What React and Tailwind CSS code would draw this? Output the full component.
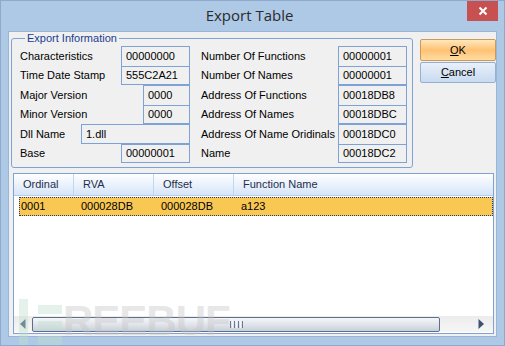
import React from "react";

const rows = [
  { left: "Characteristics", lval: "00000000", lw: "w-[69px]", lb: "border-t", right: "Number Of Functions", rval: "00000001", rb: "border-t", h: "h-[20px]" },
  { left: "Time Date Stamp", lval: "555C2A21", lw: "w-[69px]", lb: "border-y", right: "Number Of Names", rval: "00000001", rb: "border-y", h: "h-[19px]" },
  { left: "Major Version", lval: "0000", lw: "w-[47px]", lb: "border-t", right: "Address Of Functions", rval: "00018DB8", rb: "border-t", h: "h-[20px]" },
  { left: "Minor Version", lval: "0000", lw: "w-[47px]", lb: "border-y", right: "Address Of Names", rval: "00018DBC", rb: "border-y", h: "h-[19px]" },
  { left: "Dll Name", lval: "1.dll", lw: "w-[109px]", lb: "border-y", right: "Address Of Name Oridinals", rval: "00018DC0", rb: "border-t", h: "h-[20px]" },
  { left: "Base", lval: "00000001", lw: "w-[69px]", lb: "border-y", right: "Name", rval: "00018DC2", rb: "border-y", h: "h-[19px]" },
];

const columns = [
  { name: "Ordinal", w: "w-[60px] border-r" },
  { name: "RVA", w: "w-[80px] border-r" },
  { name: "Offset", w: "w-[80px] border-r" },
  { name: "Function Name", w: "flex-1" },
];

const App = () => {
  return (
    <div className="w-[505px] h-[346px] bg-[#adc9e6] border border-[#8ea9cc] flex flex-col relative overflow-hidden font-['Liberation_Sans',Arial,sans-serif] text-[11px] text-black">
      {/* Title bar */}
      <div className="h-[30px] flex">
        <div className="flex-1" />
        <div className="flex items-center text-[15px] text-[#2b2b2b] font-['Open_Sans',sans-serif] pb-[2px]">
          Export Table
        </div>
        <div className="flex-1 flex justify-end pr-[6px]">
          <div className="w-[31px] h-[21px] -mt-px bg-[#c75050] flex items-center justify-center">
            <svg width="10" height="10" viewBox="0 0 10 10">
              <path d="M1.5 1.5 L8.5 8.5 M8.5 1.5 L1.5 8.5" stroke="#fff" strokeWidth="2" />
            </svg>
          </div>
        </div>
      </div>

      {/* Client area */}
      <div className="mx-[7px] h-[306px] bg-[#f0f0f0] border border-[#9ab5d8] flex flex-col">
        <div className="flex">
          <fieldset className="ml-[2px] mt-[1px] w-[402px] border border-[#7ea2d6] rounded-[3px] pl-[8px] pr-[5px] pt-[2px] pb-[4px]">
            <legend className="ml-[5px] px-[2px] leading-[11px] text-[#1a3d8f]">Export Information</legend>
            {rows.map((r, i) => (
              <div key={i} className={`flex items-stretch ${r.h}`}>
                <div className="w-[170px] flex items-center justify-between">
                  <span>{r.left}</span>
                  <div className={`${r.lw} h-full ${r.lb} border-x border-[#7ea2d6] flex items-center pl-[4px]`}>
                    {r.lval}
                  </div>
                </div>
                <div className="ml-[11px] w-[137px] flex items-center whitespace-nowrap">{r.right}</div>
                <div className={`w-[69px] h-full ${r.rb} border-x border-[#7ea2d6] flex items-center pl-[4px]`}>
                  {r.rval}
                </div>
              </div>
            ))}
          </fieldset>

          <div className="ml-[7px] mt-[7px] w-[76px] flex flex-col gap-[1px]">
            <button className="h-[22px] rounded-[2px] border border-[#c99a5b] bg-gradient-to-b from-[#ffe8bc] via-[#ffc274] to-[#ffdca0] text-[11px] text-black">
              <span className="underline">O</span>K
            </button>
            <button className="h-[21px] rounded-[2px] border border-[#97afd0] bg-gradient-to-b from-[#e8f0fa] to-[#c9daf0] text-[11px] text-black">
              <span className="underline">C</span>ancel
            </button>
          </div>
        </div>

        {/* List view */}
        <div className="ml-[4px] mt-[5px] w-[481px] h-[161px] border border-[#7ea2d6] bg-white flex flex-col">
          <div className="h-[22px] flex bg-gradient-to-b from-white to-[#d6e5f8] border-b border-[#b7cdee]">
            {columns.map((c) => (
              <div key={c.name} className={`${c.w} flex items-center pl-[9px] border-[#c3d6f0] whitespace-nowrap text-[#1e2f4d]`}>
                {c.name}
              </div>
            ))}
          </div>
          <div className="mt-[1px] ml-[5px] h-[19px] flex bg-[#f9c853] border border-dotted border-[#233f7a]">
            <div className="w-[54px] flex items-center pl-[1px]">0001</div>
            <div className="w-[80px] flex items-center pl-[7px]">000028DB</div>
            <div className="w-[80px] flex items-center pl-[7px]">000028DB</div>
            <div className="w-[80px] flex items-center pl-[7px]">a123</div>
          </div>
          <div className="flex-1" />

          {/* Horizontal scrollbar */}
          <div className="h-[16px] mb-[1px] flex items-center bg-gradient-to-b from-[#ececec] to-[#f6f6f6]">
            <div className="w-[18px] flex justify-center">
              <svg width="6" height="10" viewBox="0 0 6 10">
                <path d="M5.5 0 L0 5 L5.5 10 Z" fill="#3d5272" />
              </svg>
            </div>
            <div className="w-[408px] h-[15px] rounded-[2px] border border-[#5d6f8c] bg-gradient-to-b from-[#f4f6f9] via-[#e1e5eb] to-[#c9cfd8] flex items-center justify-center gap-[1px]">
              <div className="w-px h-[7px] bg-[#6b7a90]" />
              <div className="w-px h-[7px] bg-[#f4f6f9]" />
              <div className="w-px h-[7px] bg-[#6b7a90]" />
              <div className="w-px h-[7px] bg-[#f4f6f9]" />
              <div className="w-px h-[7px] bg-[#6b7a90]" />
              <div className="w-px h-[7px] bg-[#f4f6f9]" />
              <div className="w-px h-[7px] bg-[#6b7a90]" />
            </div>
            <div className="flex-1 flex justify-end pr-[9px]">
              <svg width="6" height="10" viewBox="0 0 6 10">
                <path d="M0.5 0 L6 5 L0.5 10 Z" fill="#3d5272" />
              </svg>
            </div>
          </div>
        </div>
      </div>

      {/* Watermark */}
      <div className="absolute left-[18px] top-[298px] flex items-start pointer-events-none opacity-40">
        <svg width="44" height="47" viewBox="0 0 44 47">
          <rect x="0" y="0" width="9" height="47" fill="#bfe0cf" />
          <rect x="19" y="6" width="24" height="9" fill="#bfe0cf" />
          <rect x="19" y="22" width="24" height="9" fill="#bfe0cf" />
          <rect x="19" y="37" width="24" height="10" fill="#bfe0cf" />
        </svg>
        <span className="text-[42px] leading-[44px] font-black tracking-[-1px] text-[#c4c4c4] font-['Liberation_Sans',sans-serif]">
          REEBUF
        </span>
      </div>
    </div>
  );
};

export default App;
